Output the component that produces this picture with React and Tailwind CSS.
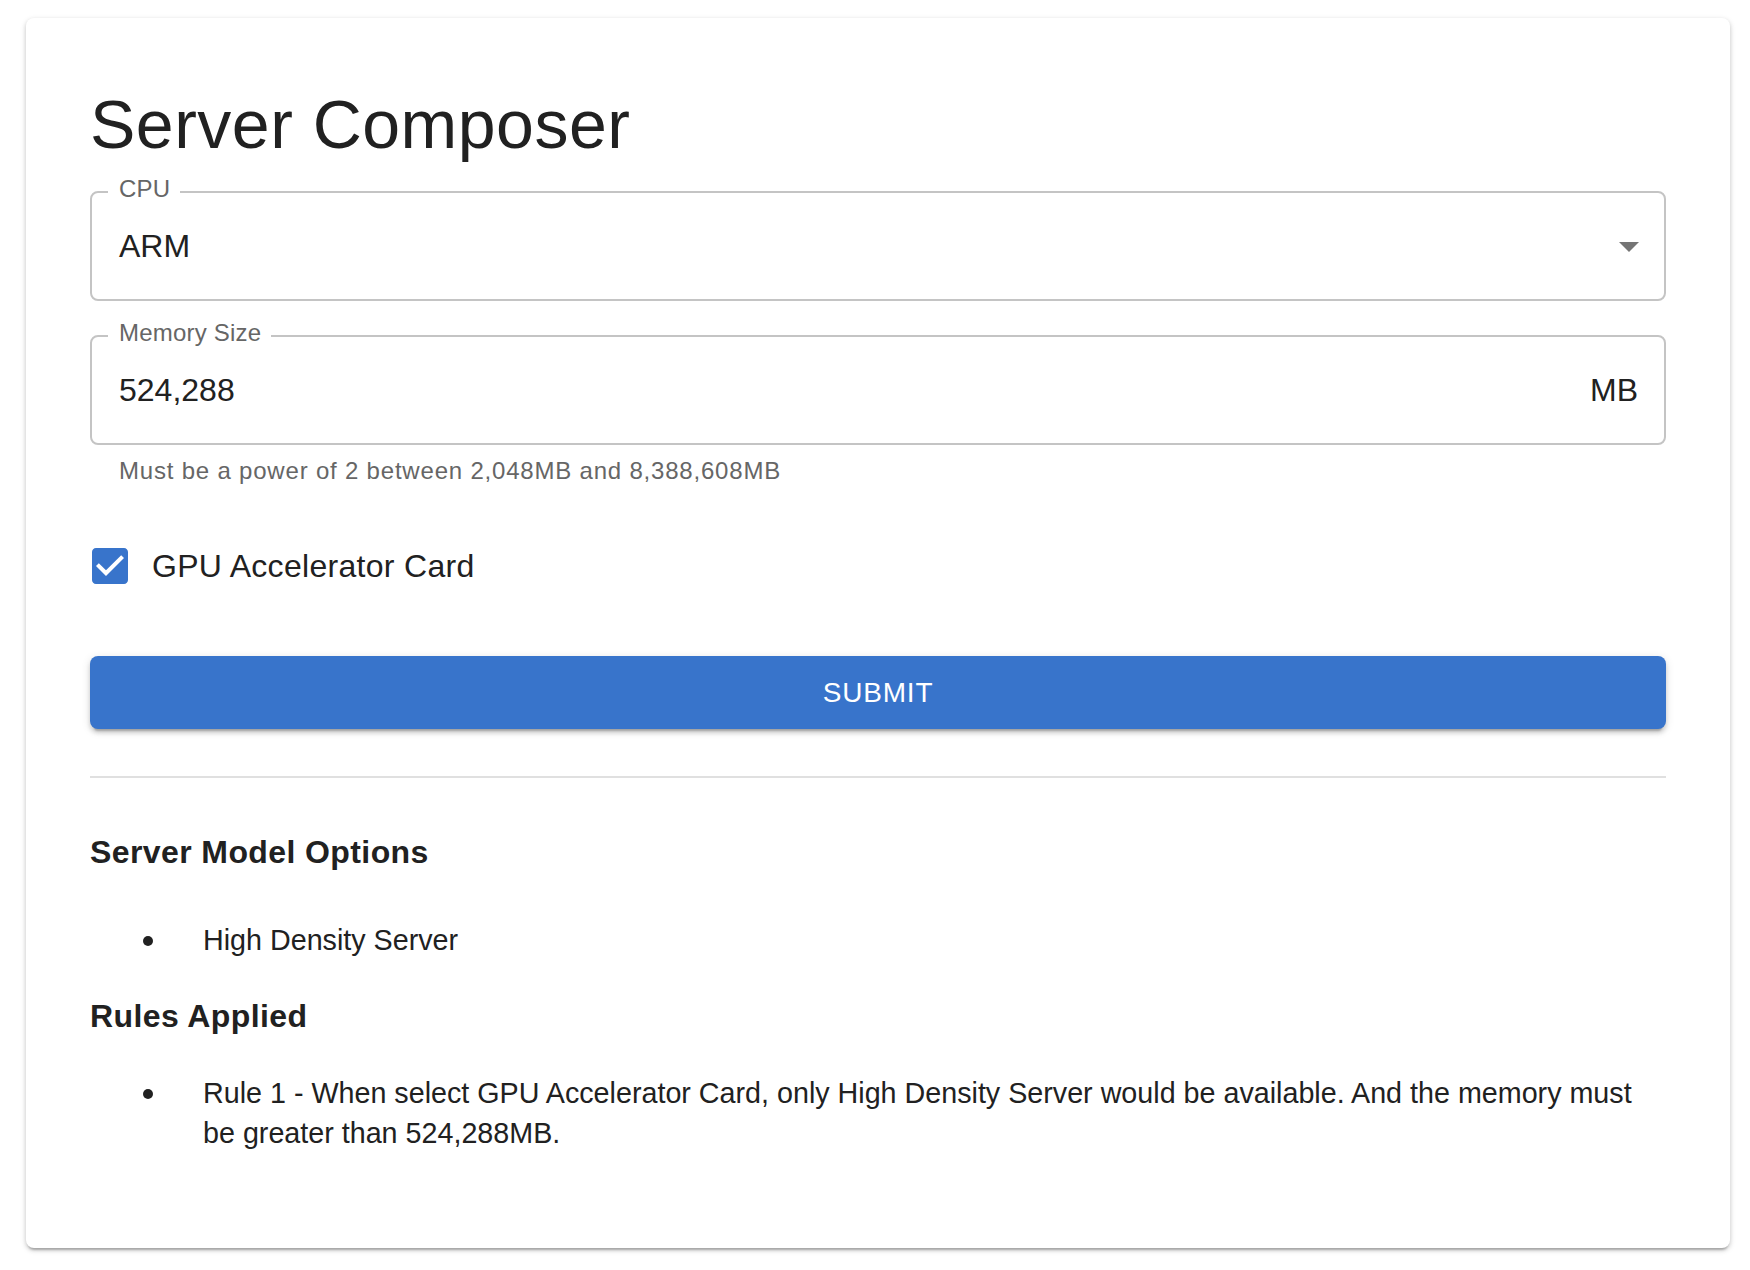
import React from 'react'

const FONT = { fontFamily: '"Liberation Sans", Helvetica, Arial, sans-serif' }

function OutlinedField({ label, children, className = '' }) {
  return (
    <div className={`relative h-[110px] rounded-[8px] border-2 border-[#c4c4c4] flex items-center ${className}`}>
      <span className="absolute -top-[16px] left-[16px] pl-[11px] pr-[10px] bg-white text-[24px] leading-[24px] tracking-[0.2px] text-[#666666]">
        {label}
      </span>
      {children}
    </div>
  )
}

function Bullet({ children }) {
  return (
    <div className="flex items-start">
      <div className="w-[113px] shrink-0 flex">
        <span className="mt-[16px] ml-[53px] w-[10px] h-[10px] rounded-full bg-[#212121]" />
      </div>
      <p className="text-[28.7px] leading-[40px] text-[#212121]">{children}</p>
    </div>
  )
}

export default function App() {
  return (
    <div className="min-h-screen bg-white pt-[18px] pl-[26px] pr-[20px]" style={FONT}>
      <div className="w-[1704px] h-[1230px] bg-white rounded-[8px] px-[64px] pt-[64px] shadow-[0_4px_2px_-2px_rgba(0,0,0,0.2),0_2px_4px_0_rgba(0,0,0,0.14),0_2px_6px_0_rgba(0,0,0,0.12)]">
        <h1 className="text-[68px] leading-[84px] tracking-[0.5px] text-[#212121]">Server Composer</h1>

        <OutlinedField label="CPU" className="mt-[25px] pl-[27px] pr-[11px] justify-between">
          <span className="text-[32px] text-[#212121]">ARM</span>
          <svg viewBox="0 0 24 24" className="w-[48px] h-[48px]" fill="#757575">
            <path d="M7 10l5 5 5-5z" />
          </svg>
        </OutlinedField>

        <OutlinedField label="Memory Size" className="mt-[34px] pl-[27px] pr-[26px] justify-between">
          <span className="text-[32px] text-[#212121]">524,288</span>
          <span className="text-[32px] text-[#212121]">MB</span>
        </OutlinedField>
        <p className="mt-[6px] pl-[29px] text-[24px] leading-[40px] tracking-[0.8px] text-[#666666]">
          Must be a power of 2 between 2,048MB and 8,388,608MB
        </p>

        <label className="mt-[51px] h-[48px] flex items-center gap-[18px]">
          <svg viewBox="0 0 24 24" className="-ml-[4px] w-[48px] h-[48px]" fill="#3874cb">
            <path d="M19 3H5c-1.11 0-2 .9-2 2v14c0 1.1.89 2 2 2h14c1.11 0 2-.9 2-2V5c0-1.1-.89-2-2-2zm-9 14l-5-5 1.41-1.41L10 14.17l7.59-7.59L19 8l-9 9z" />
          </svg>
          <span className="text-[32px] tracking-[0.3px] text-[#212121]">GPU Accelerator Card</span>
        </label>

        <button className="mt-[66px] w-full h-[73px] rounded-[8px] bg-[#3874cb] text-white text-[28px] font-medium tracking-[0.8px] uppercase shadow-[0_6px_2px_-4px_rgba(0,0,0,0.2),0_4px_4px_0_rgba(0,0,0,0.14),0_2px_10px_0_rgba(0,0,0,0.12)]">
          Submit
        </button>

        <div className="mt-[47px] h-[2px] bg-[#e0e0e0]" />

        <h2 className="mt-[54px] text-[32px] leading-[40px] font-bold tracking-[0.4px] text-[#212121]">Server Model Options</h2>
        <div className="mt-[48px]">
          <Bullet>High Density Server</Bullet>
        </div>

        <h2 className="mt-[36px] text-[32px] leading-[40px] font-bold tracking-[0.4px] text-[#212121]">Rules Applied</h2>
        <div className="mt-[37px]">
          <Bullet>
            Rule 1 - When select GPU Accelerator Card, only High Density Server would be available. And the memory must be greater than 524,288MB.
          </Bullet>
        </div>
      </div>
    </div>
  )
}
